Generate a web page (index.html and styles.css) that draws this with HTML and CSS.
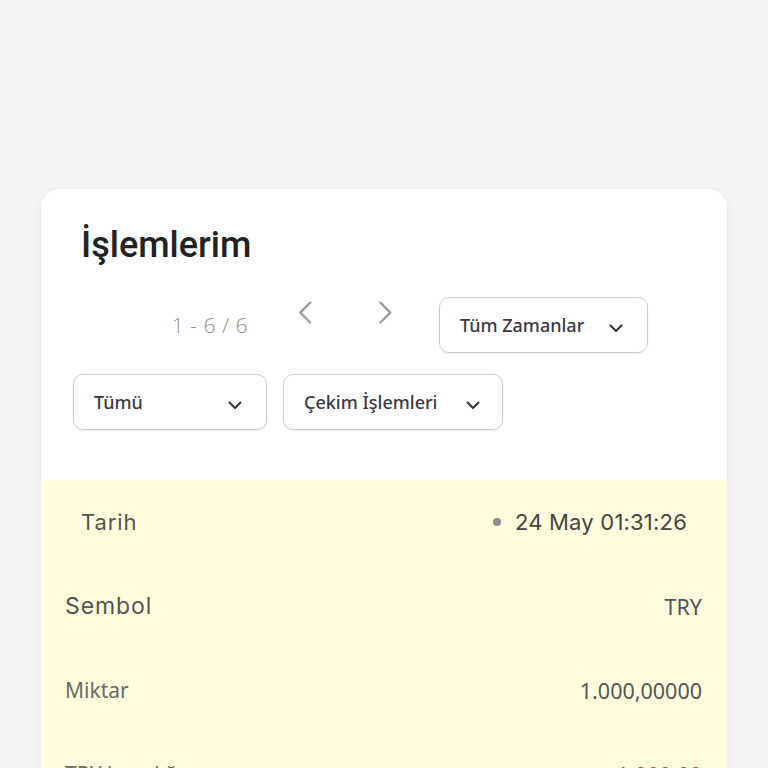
FILE: index.html
```html
<!DOCTYPE html>
<html lang="tr">
<head>
<meta charset="utf-8">
<link rel="stylesheet" href="styles.css">
</head>
<body>
<div class="card">
  <div class="head">
    <h1 class="title">İşlemlerim</h1>
    <div class="row row-top">
      <span class="pager-text">1 - 6 / 6</span>
      <span class="pager-btn prev"><svg width="24" height="28" viewBox="0 0 24 28"><path d="M18 3 L7 14 L18 25" fill="none" stroke="#9e9e9e" stroke-width="2.6" stroke-linecap="round" stroke-linejoin="round" transform="translate(-1 0) scale(0.9 0.9)"/></svg></span>
      <span class="pager-btn next"><svg width="24" height="28" viewBox="0 0 24 28"><path d="M6 3 L17 14 L6 25" fill="none" stroke="#9e9e9e" stroke-width="2.6" stroke-linecap="round" stroke-linejoin="round" transform="translate(2 0) scale(0.9 0.9)"/></svg></span>
      <div class="select sel-time"><span>Tüm Zamanlar</span><svg class="chev" width="14" height="9" viewBox="0 0 14 9"><path d="M1.5 1.5 L7 7 L12.5 1.5" fill="none" stroke="#33333f" stroke-width="2" stroke-linecap="round" stroke-linejoin="round"/></svg></div>
    </div>
    <div class="row row-bottom">
      <div class="select sel-all"><span>Tümü</span><svg class="chev" width="14" height="9" viewBox="0 0 14 9"><path d="M1.5 1.5 L7 7 L12.5 1.5" fill="none" stroke="#33333f" stroke-width="2" stroke-linecap="round" stroke-linejoin="round"/></svg></div>
      <div class="select sel-type"><span>Çekim İşlemleri</span><svg class="chev" width="14" height="9" viewBox="0 0 14 9"><path d="M1.5 1.5 L7 7 L12.5 1.5" fill="none" stroke="#33333f" stroke-width="2" stroke-linecap="round" stroke-linejoin="round"/></svg></div>
    </div>
  </div>
  <div class="detail">
    <div class="line line-date">
      <span class="lbl-date">Tarih</span>
      <span class="val-date"><i class="dot"></i>24 May 01:31:26</span>
    </div>
    <div class="line">
      <span class="lbl lbl-strong">Sembol</span>
      <span class="val">TRY</span>
    </div>
    <div class="line">
      <span class="lbl">Miktar</span>
      <span class="val">1.000,00000</span>
    </div>
    <div class="line">
      <span class="lbl">TRY karşılığı</span>
      <span class="val val-neg">-1.000,00</span>
    </div>
  </div>
</div>
</body>
</html>
```

FILE: styles.css
```css
html, body {
  margin: 0;
  padding: 0;
  background: #f5f5f5;
  height: 768px;
  overflow: hidden;
}
.card {
  margin: 189px 0 0 41px;
  width: 686px;
  background: #ffffff;
  border-radius: 20px 20px 0 0;
  box-shadow: 0 2px 12px rgba(0, 0, 0, 0.05);
}
.head {
  padding: 35px 0 50px 32px;
}
.title {
  margin: 0 0 30px 8px;
  font-family: Roboto, "Liberation Sans", sans-serif;
  font-weight: 500;
  font-size: 36px;
  line-height: 43px;
  color: #222222;
}
.row {
  display: flex;
  align-items: center;
}
.row-top {
  justify-content: flex-end;
  padding-right: 79px;
}
.row-bottom {
  margin-top: 21px;
  gap: 16px;
}
.pager-text {
  font-family: "Open Sans", "Noto Sans", sans-serif;
  font-size: 21px;
  font-weight: 300;
  color: #8f8f8f;
  margin-right: 47px;
  letter-spacing: 0.5px;
}
.pager-btn {
  display: flex;
  width: 24px;
  height: 28px;
  align-self: flex-start;
  margin-top: 3px;
}
.prev {
  margin-right: 54px;
}
.next {
  margin-right: 42px;
}
.select {
  box-sizing: border-box;
  height: 56px;
  border: 1px solid #cdcdcd;
  border-radius: 10px;
  display: flex;
  align-items: center;
  justify-content: space-between;
  padding: 0 24px 0 20px;
  font-family: "Noto Sans", "Open Sans", sans-serif;
  font-weight: 500;
  font-size: 18px;
  color: #3a3a46;
  box-shadow: 0 1px 2px rgba(0, 0, 0, 0.08);
}
.select .chev {
  margin-top: 6px;
}
.sel-time {
  width: 209px;
}
.sel-all {
  width: 194px;
}
.sel-type {
  width: 220px;
  padding-right: 22px;
}
.detail {
  background: #fffddd;
}
.line {
  height: 84px;
  display: flex;
  align-items: center;
  justify-content: space-between;
  padding: 0 25px 0 24px;
}
.line-date {
  padding: 0 40px;
}
.lbl-date, .val-date {
  font-family: Inter, "Noto Sans", sans-serif;
  font-size: 22px;
  color: #555555;
}
.lbl-date {
  letter-spacing: 0.9px;
}
.val-date {
  color: #444444;
  display: flex;
  align-items: center;
  letter-spacing: 0.2px;
}
.dot {
  width: 8px;
  height: 8px;
  border-radius: 50%;
  background: #8e8e8e;
  margin-right: 14px;
}
.lbl {
  font-family: "Noto Sans", sans-serif;
  font-size: 21px;
  color: #6a6a6a;
}
.lbl-strong {
  font-family: Inter, "Noto Sans", sans-serif;
  font-size: 23px;
  font-weight: 400;
  letter-spacing: 0.9px;
  color: #555555;
}
.val {
  font-family: "Noto Sans", sans-serif;
  font-size: 21.5px;
  color: #555555;
}
.val.val-neg {
  color: #e53935;
}
```
